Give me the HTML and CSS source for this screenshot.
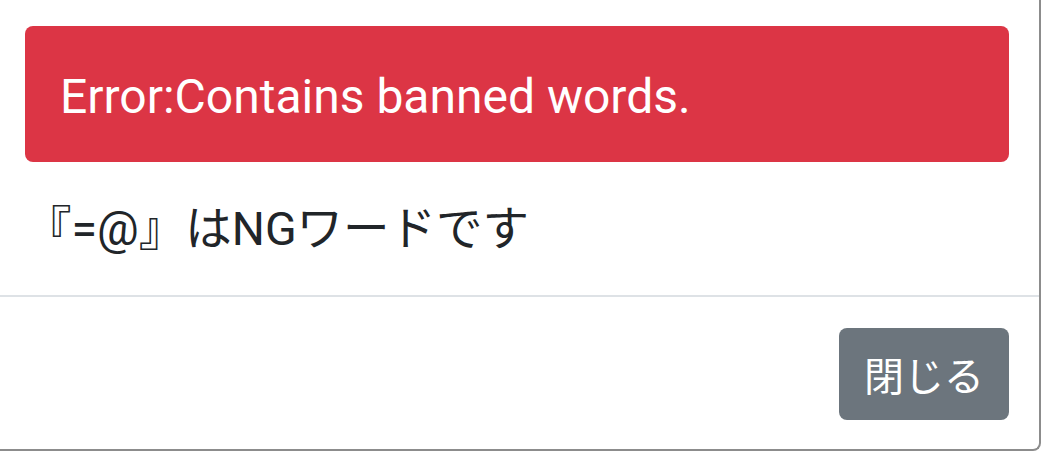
FILE: index.html
```html
<!DOCTYPE html>
<html lang="ja">
<head>
    <meta charset="UTF-8">
    <meta name="viewport" content="width=device-width, initial-scale=1.0">
    <title>NG Word</title>
    <link rel="stylesheet" href="styles.css">
</head>
<body>
    <div class="modal-content">
        <div class="modal-body">
            <div class="alert-danger">Error:Contains banned words.</div>
            <p class="message">『=@』はNGワードです</p>
        </div>
        <div class="modal-footer">
            <button type="button" class="btn-close">閉じる</button>
        </div>
    </div>
</body>
</html>
```

FILE: styles.css
```css
 body {
     margin: 0;
     padding: 0;
     background: #fff;
     font-family: Roboto, "Noto Sans CJK JP", sans-serif;
     color: #212529;
 }

 .modal-content {
     height: 451px;
     box-sizing: border-box;
     background-color: #fff;
     border-right: 2px solid #8c8c8c;
     border-bottom: 2px solid #8c8c8c;
     border-bottom-right-radius: 8px;
     display: flex;
     flex-direction: column;
 }

 .modal-body {
     padding: 26px 30px 0 25px;
     border-bottom: 2px solid #dee2e6;
 }

 .alert-danger {
     height: 136px;
     box-sizing: border-box;
     padding: 4px 35px 0;
     display: flex;
     align-items: center;
     background-color: #dc3545;
     color: #fff;
     border-radius: 8px;
     font-size: 48px;
 }

 .message {
     margin: 34px 0 32px;
     font-size: 46.5px;
     line-height: 67px;
 }

 .modal-footer {
     flex: 1;
     display: flex;
     justify-content: flex-end;
     align-items: flex-start;
     padding: 31px 30px 0 0;
 }

 .btn-close {
     width: 170px;
     height: 92px;
     border: none;
     border-radius: 8px;
     background-color: #6c757d;
     color: #fff;
     font-family: Roboto, "Noto Sans CJK JP", sans-serif;
     font-size: 40px;
     padding: 0;
     cursor: pointer;
 }
```
